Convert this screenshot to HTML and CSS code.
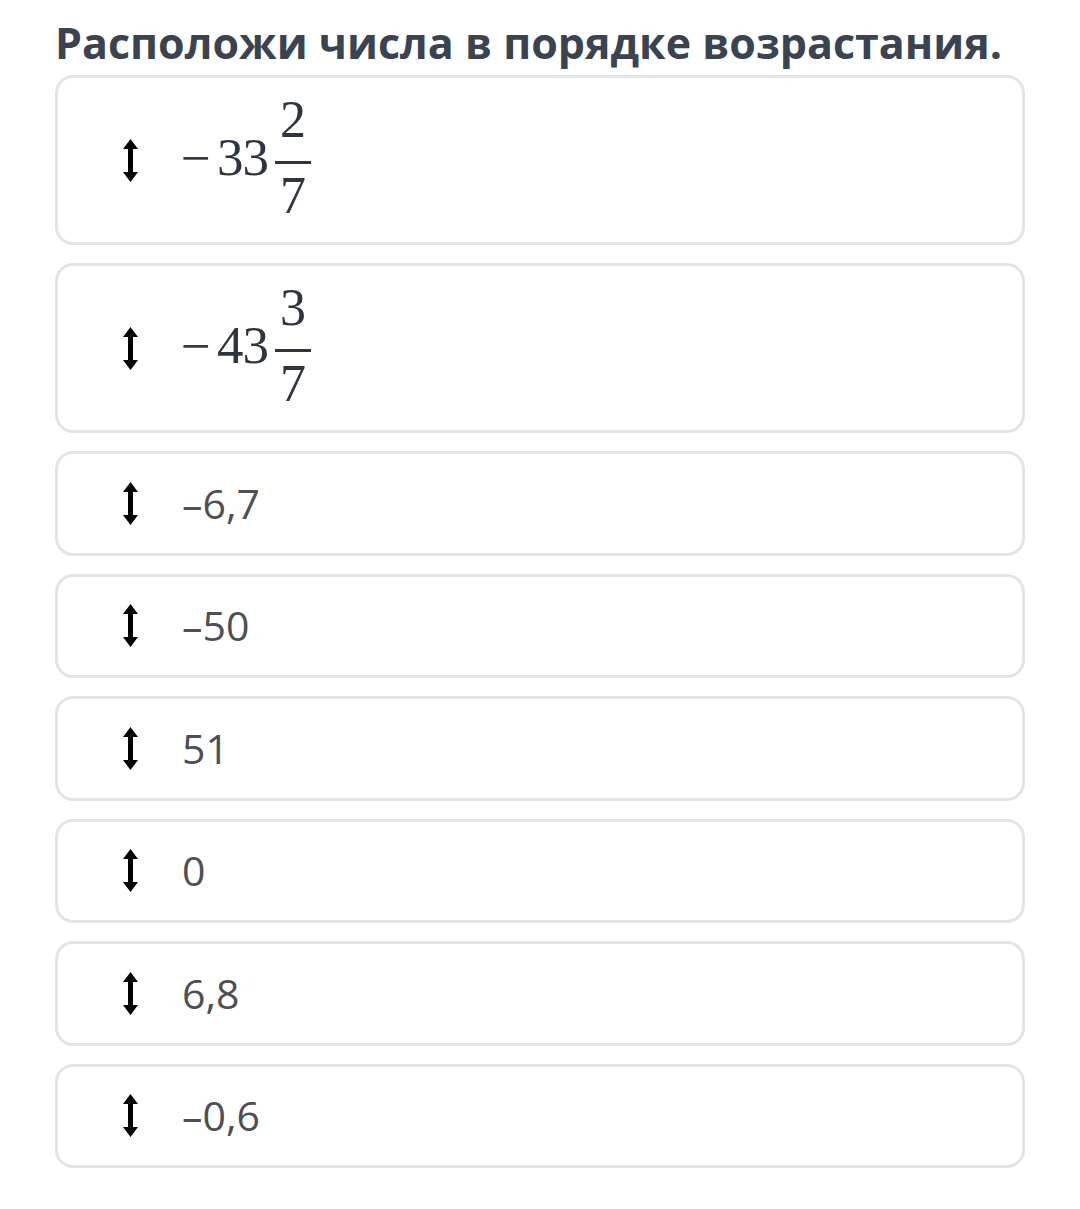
FILE: index.html
```html
<!DOCTYPE html>
<html lang="ru">
<head>
<meta charset="utf-8">
<title>Расположи числа</title>
<link rel="stylesheet" href="styles.css">
</head>
<body>
<main class="task">
  <h1 class="title">Расположи числа в порядке возрастания.</h1>
  <ul class="list">
    <li class="card card-tall">
      <svg class="handle" viewBox="0 0 15 43"><path d="M7.5 0 L15 10 L10 10 L10 33 L15 33 L7.5 43 L0 33 L5 33 L5 10 L0 10 Z"/></svg>
      <span class="math"><span class="minus">−</span><span class="whole">33</span><span class="frac"><span class="num">2</span><span class="den">7</span></span></span>
    </li>
    <li class="card card-tall">
      <svg class="handle" viewBox="0 0 15 43"><path d="M7.5 0 L15 10 L10 10 L10 33 L15 33 L7.5 43 L0 33 L5 33 L5 10 L0 10 Z"/></svg>
      <span class="math"><span class="minus">−</span><span class="whole">43</span><span class="frac"><span class="num">3</span><span class="den">7</span></span></span>
    </li>
    <li class="card">
      <svg class="handle" viewBox="0 0 15 43"><path d="M7.5 0 L15 10 L10 10 L10 33 L15 33 L7.5 43 L0 33 L5 33 L5 10 L0 10 Z"/></svg>
      <span class="value">–6,7</span>
    </li>
    <li class="card">
      <svg class="handle" viewBox="0 0 15 43"><path d="M7.5 0 L15 10 L10 10 L10 33 L15 33 L7.5 43 L0 33 L5 33 L5 10 L0 10 Z"/></svg>
      <span class="value">–50</span>
    </li>
    <li class="card">
      <svg class="handle" viewBox="0 0 15 43"><path d="M7.5 0 L15 10 L10 10 L10 33 L15 33 L7.5 43 L0 33 L5 33 L5 10 L0 10 Z"/></svg>
      <span class="value">51</span>
    </li>
    <li class="card">
      <svg class="handle" viewBox="0 0 15 43"><path d="M7.5 0 L15 10 L10 10 L10 33 L15 33 L7.5 43 L0 33 L5 33 L5 10 L0 10 Z"/></svg>
      <span class="value">0</span>
    </li>
    <li class="card">
      <svg class="handle" viewBox="0 0 15 43"><path d="M7.5 0 L15 10 L10 10 L10 33 L15 33 L7.5 43 L0 33 L5 33 L5 10 L0 10 Z"/></svg>
      <span class="value">6,8</span>
    </li>
    <li class="card">
      <svg class="handle" viewBox="0 0 15 43"><path d="M7.5 0 L15 10 L10 10 L10 33 L15 33 L7.5 43 L0 33 L5 33 L5 10 L0 10 Z"/></svg>
      <span class="value">–0,6</span>
    </li>
  </ul>
</main>
</body>
</html>
```

FILE: styles.css
```css
html, body {
  margin: 0;
  padding: 0;
  background: #ffffff;
}

.task {
  padding: 17px 55px 0 55px;
  width: 970px;
}

.title {
  margin: 0 0 6px 0;
  font-family: "Open Sans", "Noto Sans", sans-serif;
  font-weight: 700;
  font-size: 43px;
  line-height: 52px;
  color: #3a4350;
  white-space: nowrap;
}

.list {
  list-style: none;
  margin: 0;
  padding: 0;
  display: flex;
  flex-direction: column;
  gap: 18px;
}

.card {
  box-sizing: border-box;
  height: 104.5px;
  border: 3px solid #e2e5e8;
  border-radius: 18px;
  display: flex;
  align-items: center;
  padding-left: 65px;
  gap: 44px;
}

.card-tall {
  height: 170px;
}

.handle {
  width: 15px;
  height: 43px;
  flex: none;
  fill: #000000;
}

.value {
  font-family: "Open Sans", "Noto Sans", sans-serif;
  font-size: 41px;
  color: #4d4f52;
  line-height: 1;
}

.math {
  font-family: "Liberation Serif", "DejaVu Serif", serif;
  font-size: 53px;
  color: #2f3540;
  display: inline-flex;
  align-items: center;
  line-height: 1;
  margin-top: -6px;
  margin-left: -1px;
}

.minus {
  margin-right: 6px;
  margin-top: 2px;
}

.whole {
  letter-spacing: -1px;
}

.frac {
  display: inline-flex;
  flex-direction: column;
  align-items: center;
  margin-left: 7px;
  font-size: 52px;
  margin-top: 2px;
}

.num {
  display: block;
  padding: 0 5px 15px 5px;
  border-bottom: 3px solid #2f3540;
  line-height: 1;
}

.den {
  display: block;
  padding-top: 6px;
  line-height: 1;
}
```
